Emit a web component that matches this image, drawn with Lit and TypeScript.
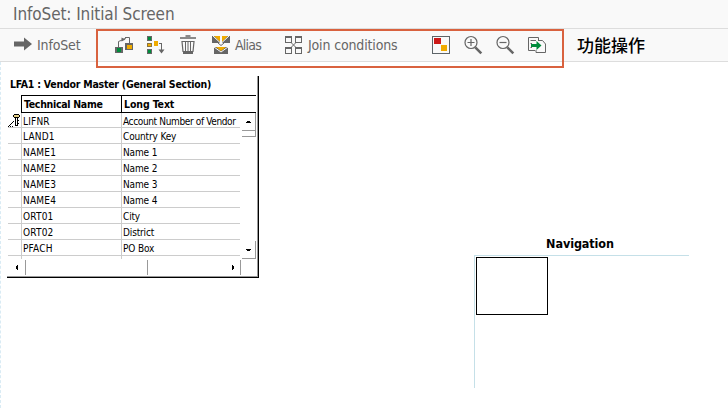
import { LitElement, html, svg, css } from "lit";
import { customElement } from "lit/decorators.js";
import { classMap } from "lit/directives/class-map.js";

const rows = [
  ["LIFNR", "Account Number of Vendor", true],
  ["LAND1", "Country Key"],
  ["NAME1", "Name 1"],
  ["NAME2", "Name 2"],
  ["NAME3", "Name 3"],
  ["NAME4", "Name 4"],
  ["ORT01", "City"],
  ["ORT02", "District"],
  ["PFACH", "PO Box"],
] as [string, string, boolean?][];

const G = "#666";
const lens = svg`<circle cx="7" cy="6.500" r="6" fill="none" stroke="#666" stroke-width="1.200"/>
  <path d="M11.300 11.300L17.300 17.300" stroke="#666" stroke-width="2.600"/>`;

const icons: Record<string, unknown> = {
  insert: svg`<g shape-rendering="crispEdges"><rect x="0" y="11" width="8" height="6" fill="${G}"/><rect x="2" y="12" width="4" height="4" fill="#008c3c"/>
    <rect x="10" y="7" width="8" height="7" fill="${G}"/><rect x="12" y="9" width="5" height="4" fill="#f0ab00"/></g>
    <path d="M3.500 11V5.500L6 4.500L11 2M10 1.500H14.500V7" fill="none" stroke="${G}"/><path d="M6.500 1.500L10.500 3.500L6.500 5.500Z" fill="${G}"/>`,
  tree: svg`<g shape-rendering="crispEdges"><rect x="0" y="0" width="5" height="5" fill="#666"/><rect x="1" y="1" width="3" height="3" fill="#008c3c"/>
    <rect x="0" y="7" width="5" height="4" fill="#8a7440"/><rect x="1" y="8" width="3" height="2" fill="#f0ab00"/>
    <rect x="0" y="13" width="5" height="5" fill="#666"/><rect x="1" y="14" width="3" height="3" fill="#008c3c"/>
    <rect x="7" y="5" width="4" height="5" fill="#f0ab00"/><path d="M12 7.500H14.500V14" fill="none" stroke="#666"/></g>
    <path d="M11.500 13.500H17.500L14.500 17.500Z" fill="#666"/>`,
  trash: svg`<path d="M0 2H16M5.500 0H10.500" stroke="#666" stroke-width="1.600"/><path d="M2 5.500H14L13 15.500H3Z" fill="none" stroke="#666" stroke-width="1.200"/>
    <path d="M5.500 6V15M8 6V15M10.500 6V15" stroke="#666"/><rect x="3" y="15" width="10" height="3" fill="#666"/>`,
  alias: svg`<path d="M0 0H8V7H0ZM10 0H18V7H10Z" fill="#666"/><path d="M2 0H8V6Z" fill="#f0ab00"/><path d="M16 0H10V6Z" fill="#f0ab00"/>
    <path d="M1 0L8 6.500M17 0L10 6.500" stroke="#f9f9f9"/>
    <path d="M6 7L9 9.500L12 7" fill="none" stroke="#666"/><rect x="2" y="11" width="14" height="7" fill="#666"/><path d="M4 11H14L9 15Z" fill="#f0ab00"/><path d="M2 11L9 16L16 11" fill="none" stroke="#f9f9f9"/>`,
  join: svg`<g fill="none" stroke="#666" shape-rendering="crispEdges"><rect x=".5" y=".5" width="6" height="6"/><rect x="10.500" y=".5" width="6" height="6"/><rect x=".5" y="11.500" width="6" height="6"/><rect x="10.500" y="11.500" width="6" height="6"/><path d="M0 1H7M10 1H17M0 12H7M10 12H17" stroke-width="2"/></g><path d="M6 6.500L11 11.500M11 6.500L6 11.500" stroke="#666"/>`,
  overview: svg`<g shape-rendering="crispEdges"><rect x=".5" y=".5" width="17" height="17" fill="none" stroke="#5d6468"/><rect x="2" y="2" width="7" height="6" fill="#cc1919"/><rect x="9" y="9" width="6" height="6" fill="#f0ab00"/></g>`,
  plus: svg`${lens}<path d="M3.500 6.500H10.500M7 3V10" stroke="#666" stroke-width="1.200"/>`,
  minus: svg`${lens}<path d="M3.500 6.500H10.500" stroke="#666" stroke-width="1.200"/>`,
  copy: svg`<path d="M10.500 5V1.500H.5V14.500H7M2.500 4.500H8M2.500 7.500H4M2.500 11.500H4" fill="none" stroke="#666"/><path d="M11 4.500H14.500L17.500 8V16.500H8V14" fill="none" stroke="#666"/><path d="M3 8H8.500V5L13.500 9.500L8.500 14V11H3Z" fill="#008c3c"/>`,
};

const icon = (name: string) =>
  html`<svg class="icon ${name}" width="18" height="18" viewBox="0 0 18 18">${icons[name]}</svg>`;

@customElement("table-panel")
class TablePanel extends LitElement {
  static styles = css`
    :host { display: block; width: 251px; height: 201px; border-right: 1px solid #000; border-bottom: 1px solid #000; font: 10px/17px "DejaVu Sans Condensed", sans-serif; color: #000; }
    .frame { box-sizing: border-box; width: 251px; height: 201px; border-right: 1px solid #999; border-bottom: 1px solid #999; padding-left: 1px; }
    .title { height: 19px; line-height: 17px; padding-left: 2px; font-size: 10.5px; font-weight: bold; letter-spacing: -0.24px; white-space: nowrap; }
    .head { display: grid; grid-template-columns: 100px 134px; margin-left: 13px; border-top: 1px solid #000; border-bottom: 1px solid #000; border-left: 1px solid #000; height: 16px; width: 234px; font-weight: bold; line-height: 16px; font-size: 10.5px; letter-spacing: -0.12px; }
    .head span { padding-left: 2px; white-space: nowrap; }
    .head .tech { letter-spacing: -0.3px; }
    .head .long { border-left: 1px solid #000; margin-left: -1px; }
    .body { display: flex; height: 146px; }
    .rows { width: 232px; height: 146px; overflow: hidden; }
    .row { display: grid; grid-template-columns: 13px 100px 119px; height: 15px; border-bottom: 1px solid #ccc; white-space: nowrap; }
    .row.first { height: 14px; line-height: 17px; }
    .cell { border-left: 1px solid #ccc; padding-left: 1px; height: 15px; letter-spacing: 0.2px; }
    .cell.second { letter-spacing: -0.15px; }
    .first .cell.second { letter-spacing: -0.36px; }
    .key { display: block; }
    .vbar { display: flex; flex-direction: column; justify-content: space-between; width: 14px; margin-left: 2px; }
    .btn { box-sizing: border-box; height: 18px; border-right: 1px solid #999; border-bottom: 1px solid #999; display: grid; place-items: center; }
    .thumb { height: 5px; border-right: 1px solid #999; border-bottom: 1px solid #999; }
    .hbar { display: flex; align-items: center; height: 17px; }
    .hbar div { box-sizing: border-box; height: 15px; border-right: 1px solid #999; display: flex; align-items: center; }
    .left { width: 18px; padding-left: 7px; }
    .mid { width: 122px; }
    .right { width: 93px; justify-content: flex-end; padding-right: 5px; }
  `;
  render() {
    const arrow = (d: string) => html`<svg width="5" height="7" viewBox="0 0 5 7" shape-rendering="crispEdges"><path d=${d} fill="#000"/></svg>`;
    return html`<div class="frame">
      <div class="title">LFA1 : Vendor Master (General Section)</div>
      <div class="head"><span class="tech">Technical Name</span><span class="long">Long Text</span></div>
      <div class="body">
        <div class="rows">
          ${rows.map(([name, text, key], i) => html`<div class=${classMap({ row: true, first: i === 0 })}>
            <span>${key ? html`<svg class="key" width="13" height="14" viewBox="0 0 13 14" shape-rendering="crispEdges"><path d="M6 1H11V2H12V4H11V5H6V4H5V2H6Z" fill="#000"/><path d="M6 2H11V4H6Z" fill="#e3cf86"/><path d="M7 5H8V13H7ZM9 5H10V13H9ZM7 12H10V13H7ZM10 7H11V8H10ZM10 10H11V11H10Z" fill="#000"/><path d="M0 13H1V14H0ZM1 12H2V13H1ZM2 11H3V12H2ZM3 10H4V11H3ZM4 9H5V10H4ZM5 8H6V9H5ZM2 13H3V14H2ZM4 13H5V14H4Z" fill="#000"/></svg>` : ""}</span>
            <span class="cell">${name}</span><span class="cell second">${text}</span></div>`)}
          <div class="row"><span></span><span class="cell"></span><span class="cell"></span></div>
        </div>
        <div class="vbar">
          <div><div class="btn">${arrow("M1 3H4V4H5V5H0V4H1Z")}</div><div class="thumb"></div></div>
          <div class="btn">${arrow("M0 3H5V4H4V5H1V4H0Z")}</div>
        </div>
      </div>
      <div class="hbar"><div class="left">${arrow("M3 1V6H2V5H1V3H1V2H2V1Z")}</div><div class="mid"></div><div class="right">${arrow("M2 1V6H3V5H4V2H3V1Z")}</div></div>
    </div>`;
  }
}

@customElement("app-root")
class AppRoot extends LitElement {
  static styles = css`
    :host { display: block; position: relative; width: 728px; height: 408px; overflow: hidden; background: #fff; font-family: "DejaVu Sans Condensed", sans-serif; color: #666; }
    .titlebar { box-sizing: border-box; height: 29px; background: #f9f9f9; border-bottom: 1px solid #ddd; padding-left: 13px; font-size: 17px; line-height: 28px; white-space: nowrap; letter-spacing: -0.1px; }
    .toolbar { box-sizing: border-box; display: flex; align-items: center; height: 33px; background: #f9f9f9; border-bottom: 1px solid #ddd; padding-left: 14px; font-size: 14px; white-space: nowrap; letter-spacing: -0.15px; }
    .icon { flex: none; overflow: visible; }
    .label { flex: none; line-height: 32px; }
    .l1 { width: 78px; margin-left: 5px; }
    .l2 { width: 50px; margin-left: 5px; letter-spacing: -0.8px; }
    .l3 { width: 124px; margin-left: 5px; }
    .tree { margin-left: 14px; }
    .trash { margin-left: 15px; }
    .alias { margin-left: 14px; }
    .plus, .minus, .copy { margin-left: 14px; }
    .note { margin-left: 31px; color: #000; font: 500 17px/32px "Noto Sans CJK SC", sans-serif; letter-spacing: 0; }
    .mark { position: absolute; left: 96px; top: 29px; width: 464px; height: 35px; border: 2px solid #d9623f; }
    .canvas { display: flex; align-items: flex-start; height: 346px; box-sizing: border-box; border-left: 1px dashed #d9ebf4; }
    table-panel { flex: none; margin: 14px 0 0 6px; }
    .nav { width: 215px; margin: 173px 0 0 215px; }
    .navtitle { height: 20px; line-height: 18px; text-align: center; padding-right: 3px; font-size: 12.5px; font-weight: bold; color: #000; letter-spacing: -0.1px; }
    .map { box-sizing: border-box; height: 133px; border-top: 1px solid #c5e0e8; border-left: 1px solid #c5e0e8; padding: 1px; }
    .view { box-sizing: border-box; width: 72px; height: 58px; border: 1px solid #000; }
  `;
  render() {
    return html`
      <div class="titlebar">InfoSet: Initial Screen</div>
      <div class="toolbar">
        <svg class="icon" width="18" height="18" viewBox="0 0 18 18"><path d="M0 5.500H10V1.500L18 8L10 14.500V10.500H0Z" fill="#666"/></svg>
        <span class="label l1">InfoSet</span>
        ${icon("insert")}${icon("tree")}${icon("trash")}${icon("alias")}
        <span class="label l2">Alias</span>
        ${icon("join")}
        <span class="label l3">Join conditions</span>
        ${icon("overview")}${icon("plus")}${icon("minus")}${icon("copy")}
        <span class="label note">功能操作</span>
      </div>
      <div class="canvas">
        <table-panel></table-panel>
        <div class="nav"><div class="navtitle">Navigation</div><div class="map"><div class="view"></div></div></div>
      </div>
      <div class="mark"></div>`;
  }
}
